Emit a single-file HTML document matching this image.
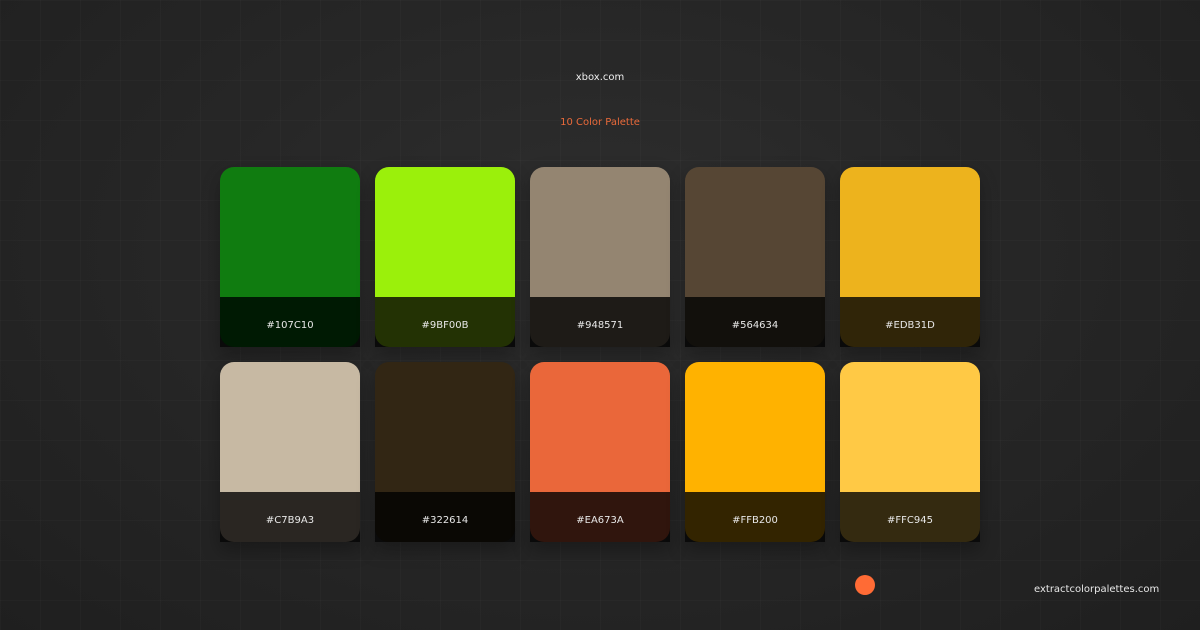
<!DOCTYPE html>
<html><head><meta charset="utf-8"><style>
html,body{margin:0;padding:0}
body{width:1200px;height:630px;overflow:hidden;position:relative;font-family:"DejaVu Sans","Liberation Sans",sans-serif;
background:
linear-gradient(rgba(255,255,255,0.02) 1px,transparent 1px) 0 0/40px 40px,
linear-gradient(90deg,rgba(255,255,255,0.02) 1px,transparent 1px) 0 0/40px 40px,
radial-gradient(ellipse at 50% 40%,#2e2e2e 0%,#262626 50%,#1f1f1f 100%);}
.t{position:absolute;left:0;width:1200px;text-align:center;font-size:10px}
.c{position:absolute;width:140px;height:180px;box-shadow:0 8px 18px rgba(0,0,0,0.3);border-radius:14px 14px 0 0}
.c:before{content:"";position:absolute;left:0;right:0;bottom:0;height:20px;background:#0a0a0a}
.c .in{position:absolute;inset:0;border-radius:14px;overflow:hidden}
.c .top{height:130px}
.c .bot{height:50px;color:#e8e8e8;font-size:10px;text-align:center;line-height:57px}
</style></head><body>
<div class="t" style="top:72px;color:#f0f0f0">xbox.com</div>
<div class="t" style="top:117px;color:#ea6a3a">10 Color Palette</div>

<div class="c" style="left:220px;top:167px"><div class="in"><div class="top" style="background:#107C10"></div><div class="bot" style="background:#001a03">#107C10</div></div></div>
<div class="c" style="left:375px;top:167px"><div class="in"><div class="top" style="background:#9BF00B"></div><div class="bot" style="background:#233204">#9BF00B</div></div></div>
<div class="c" style="left:530px;top:167px"><div class="in"><div class="top" style="background:#948571"></div><div class="bot" style="background:#1e1b17">#948571</div></div></div>
<div class="c" style="left:685px;top:167px"><div class="in"><div class="top" style="background:#564634"></div><div class="bot" style="background:#12100c">#564634</div></div></div>
<div class="c" style="left:840px;top:167px"><div class="in"><div class="top" style="background:#EDB31D"></div><div class="bot" style="background:#302508">#EDB31D</div></div></div>

<div class="c" style="left:220px;top:362px"><div class="in"><div class="top" style="background:#C7B9A3"></div><div class="bot" style="background:#2a2622">#C7B9A3</div></div></div>
<div class="c" style="left:375px;top:362px"><div class="in"><div class="top" style="background:#322614"></div><div class="bot" style="background:#0a0804">#322614</div></div></div>
<div class="c" style="left:530px;top:362px"><div class="in"><div class="top" style="background:#EA673A"></div><div class="bot" style="background:#30150d">#EA673A</div></div></div>
<div class="c" style="left:685px;top:362px"><div class="in"><div class="top" style="background:#FFB200"></div><div class="bot" style="background:#332400">#FFB200</div></div></div>
<div class="c" style="left:840px;top:362px"><div class="in"><div class="top" style="background:#FFC945"></div><div class="bot" style="background:#342a10">#FFC945</div></div></div>

<div style="position:absolute;left:855px;top:575px;width:20px;height:20px;border-radius:50%;background:#ff6b35"></div>
<div style="position:absolute;left:1034px;top:584px;color:#e8e8e8;font-size:10px">extractcolorpalettes.com</div>
</body></html>
